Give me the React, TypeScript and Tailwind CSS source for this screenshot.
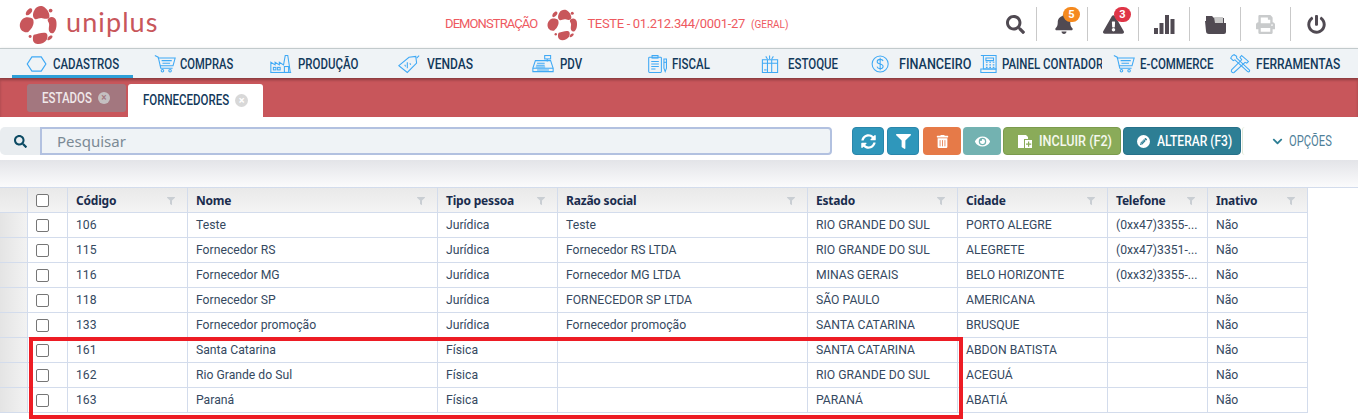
import React from "react";
import { FaSearch, FaBell, FaExclamationTriangle, FaFilter, FaSyncAlt, FaTrashAlt, FaEye, FaChevronDown, FaPrint, FaPowerOff, FaPencilAlt } from "react-icons/fa";

const Logo = ({ size }: { size: number }) => (
  <svg width={size} height={size} viewBox="0 0 40 44" fill="#c8565b">
    <path d="M16 6c2-4 8-5 11-2 4 3 6 9 4 11-3 2-6 0-8 0-3 0-5 2-7 1-3-2-2-7 0-10z" />
    <path d="M10 5c2-1 4 0 3 3-1 2-4 5-6 4-2-2 1-6 3-7z" />
    <circle cx="33" cy="7" r="2" />
    <path d="M31 15c3-2 7-1 8 3 1 5 0 11-3 13-3 1-5-1-5-4 0-3 1-5 0-7-1-2-2-3 0-5z" />
    <path d="M3 16c3-3 9-2 11 0 1 2 1 5 0 7-1 3-3 5-5 7-2 1-6 0-8-3-2-4-1-8 2-11z" />
    <circle cx="11" cy="35" r="1.6" />
    <path d="M15 33c4-1 9-3 13-2 2 1 2 4 1 7-2 3-6 5-9 5-3 0-6-2-6-5 0-2 0-4 1-5z" />
    <path d="M31 35c1-1 4-2 4 0 0 2-3 4-5 4-1 0 0-3 1-4z" />
  </svg>
);

const S = ({ children }: { children: React.ReactNode }) => (
  <svg width="22" height="20" viewBox="0 0 26 22" fill="none" stroke="#3fa9f5" strokeWidth="1.250" className="shrink-0">{children}</svg>
);

const Hexagon = () => <S><path d="M7 2.500h11l5.500 8.500-5.500 8.500H7L1.500 11z" strokeWidth="1.400" /></S>;
const Cart = () => (
  <S>
    <path d="M1 1l4 2 3 13h14" /><path d="M4.500 4H25l-2.500 9H7" /><path d="M9 7h12M10 10h9" />
    <circle cx="10" cy="19" r="1.500" /><circle cx="19" cy="19" r="1.500" />
  </S>
);
const Factory = () => (
  <S>
    <path d="M1 21V9l5 3V9l5 3V9l5 3 2-11h3l3 20z" /><path d="M1 21h24" /><rect x="4" y="15" width="3" height="3" /><rect x="9" y="15" width="3" height="3" /><rect x="17" y="14" width="5" height="7" />
  </S>
);
const Tag = () => (
  <S>
    <path d="M1 13L13 3l8-1 1 8-11 11z" /><path d="M22 4l3-3" /><path d="M11 9v7M8 12l1 2M14 10l1 2" />
  </S>
);
const Register = () => (
  <S>
    <path d="M1 16l3-9h13l5 0 3 9v4H1z" /><path d="M1 16h24" /><rect x="15" y="1" width="7" height="4" /><path d="M18 5v3" /><path d="M6 10h9M5 12.500h10M4.500 14.500h11M6 18h14" />
  </S>
);
const Clipboard = () => (
  <S>
    <rect x="2" y="3" width="15" height="18" rx="1" /><rect x="6" y="1" width="7" height="3" /><path d="M5 8h9M5 11h9M5 14h9M5 17h5" /><path d="M20 5h3v11l-1.500 4-1.500-4z" /><path d="M20 9h3" />
  </S>
);
const Box = () => (
  <S>
    <path d="M4 6h18v15H4z" /><path d="M4 10h18M10 6v15M15 6v15" /><path d="M10 5l-2-3M15 5l2-3M12.500 5V1" /><path d="M6 18h3" />
  </S>
);
const Dollar = () => (
  <S>
    <circle cx="12" cy="11" r="9.500" /><path d="M15.500 7.500C15 6 13.500 5.500 12 5.500c-2 0-3.500 1-3.500 2.700 0 3.600 7 1.800 7 5.500 0 1.800-1.500 2.800-3.500 2.800-1.800 0-3.300-.7-3.700-2.300M12 3.500v15" />
  </S>
);
const Calc = () => (
  <S>
    <path d="M4 1h15v16H4z" /><path d="M1 17h18v4H1z" /><path d="M1 1h5M7 4h9v3H7zM7 9h2M11 9h2M15 9h2M7 12h2M11 12h2M15 12h2M7 15h2M11 15h2M15 15h2" />
  </S>
);
const Tools = () => (
  <S>
    <path d="M4 1L2 4l3 3 2-1 15 14c2 1 3-1 2-2L9 4 9 2 6 0z" /><path d="M15 1l8 7-2 2-2-1-13 12c-2 1-4-1-3-3L15 6l-2-3z" />
  </S>
);

const navBase = "border-b-[3px] border-transparent";
const navItems = [
  { label: "CADASTROS", icon: <Hexagon />, box: "w-[121px] pl-[14px] border-b-[3px] border-[#2d9fd8]", text: "scale-x-[0.82]" },
  { label: "COMPRAS", icon: <Cart />, box: `w-[116px] pl-[21px] ${navBase}`, text: "-ml-[1px] scale-x-[0.8]" },
  { label: "PRODUÇÃO", icon: <Factory />, box: `w-[149px] pl-[21px] ${navBase}`, text: "ml-[1px] scale-x-[0.82]" },
  { label: "VENDAS", icon: <Tag />, box: `w-[134px] pl-[0px] ${navBase}`, text: "ml-[2px] scale-x-[0.86]" },
  { label: "PDV", icon: <Register />, box: `w-[115px] pl-[0px] ${navBase}`, text: "ml-[1px] scale-x-[0.82]" },
  { label: "FISCAL", icon: <Clipboard />, box: `w-[112px] pl-[0px] ${navBase}`, text: "-ml-[2px] scale-x-[0.82]" },
  { label: "ESTOQUE", icon: <Box />, box: `w-[111px] pl-[0px] ${navBase}`, text: "ml-[2px] scale-x-[0.82]" },
  { label: "FINANCEIRO", icon: <Dollar />, box: `w-[110px] pl-[0px] ${navBase}`, text: "ml-[2px] scale-x-[0.9]" },
  { label: "PAINEL CONTADOR", icon: <Calc />, box: `w-[133px] pl-[0px] ${navBase}`, text: "-ml-[5px] w-[122px] shrink-0 overflow-hidden scale-x-[0.82]" },
  { label: "E-COMMERCE", icon: <Cart />, box: `w-[116px] pl-[0px] ${navBase}`, text: "scale-x-[0.82]" },
  { label: "FERRAMENTAS", icon: <Tools />, box: `w-[118px] pl-[0px] ${navBase}`, text: "scale-x-[0.86]" },
];

const cols = ["Código", "Nome", "Tipo pessoa", "Razão social", "Estado", "Cidade", "Telefone", "Inativo"];
const rows = [
  ["106", "Teste", "Jurídica", "Teste", "RIO GRANDE DO SUL", "PORTO ALEGRE", "(0xx47)3355-...", "Não"],
  ["115", "Fornecedor RS", "Jurídica", "Fornecedor RS LTDA", "RIO GRANDE DO SUL", "ALEGRETE", "(0xx47)3351-...", "Não"],
  ["116", "Fornecedor MG", "Jurídica", "Fornecedor MG LTDA", "MINAS GERAIS", "BELO HORIZONTE", "(0xx32)3355-...", "Não"],
  ["118", "Fornecedor SP", "Jurídica", "FORNECEDOR SP LTDA", "SÃO PAULO", "AMERICANA", "", "Não"],
  ["133", "Fornecedor promoção", "Jurídica", "Fornecedor promoção", "SANTA CATARINA", "BRUSQUE", "", "Não"],
  ["161", "Santa Catarina", "Física", "", "SANTA CATARINA", "ABDON BATISTA", "", "Não"],
  ["162", "Rio Grande do Sul", "Física", "", "RIO GRANDE DO SUL", "ACEGUÁ", "", "Não"],
  ["163", "Paraná", "Física", "", "PARANÁ", "ABATIÁ", "", "Não"],
];

const gridCols = "grid grid-cols-[28px_40px_120px_250px_120px_250px_150px_150px_100px_100px] w-[1308px]";
const cell = "border-r border-b border-[#d3dcec] flex items-center";
const Check = () => <span className="block w-[13px] h-[13px] rounded-[2px] border border-[#767676] bg-white" />;

const HeadIcon = ({ children, badge, badgeColor }: { children: React.ReactNode; badge?: string; badgeColor?: string }) => (
  <div className="relative w-[51px] h-[34px] flex items-center justify-center border-r border-[#c9c9c9] text-[#504a52]">
    {children}
    {badge && (
      <span className={`absolute top-0 left-[26px] w-[17px] h-[15px] rounded-full text-white text-[11px] leading-[15px] text-center font-bold ${badgeColor}`}>{badge}</span>
    )}
  </div>
);

export default function App() {
  return (
    <div className="relative w-[1358px] h-[419px] overflow-hidden bg-white font-['Roboto',sans-serif] text-[#12395b]">
      <header className="h-[48px] flex items-center bg-white">
        <div className="w-[445px] flex items-center pl-[18px] shrink-0">
          <Logo size={41} />
          <span className="ml-[7px] font-['Lato',sans-serif] text-[27px] leading-none tracking-[1.1px] text-[#c8565b] -mt-[5px]">uniplus</span>
        </div>
        <div className="w-[540px] flex items-center text-[#ee5a5f] text-[13px] tracking-[-0.33px] shrink-0">
          <span className="tracking-[-0.9px]">DEMONSTRAÇÃO</span>
          <span className="ml-[9px] mr-[8px] flex"><Logo size={33} /></span>
          <span>TESTE - 01.212.344/0001-27</span>
          <span className="ml-[6px] text-[10px] tracking-normal">(GERAL)</span>
        </div>
        <div className="ml-[6px] flex items-center">
          <div className="w-[46px] h-[34px] flex items-center justify-center border-r border-[#c9c9c9] text-[#504a52] pl-[3px]"><FaSearch size={19} /></div>
          <HeadIcon badge="5" badgeColor="bg-[#f58a1f]"><span className="ml-[3px] flex"><FaBell size={20} /></span></HeadIcon>
          <HeadIcon badge="3" badgeColor="bg-[#df3547]"><FaExclamationTriangle size={21} /></HeadIcon>
          <HeadIcon>
            <svg width="21" height="20" viewBox="0 0 21 20" fill="#504a52"><rect x="0" y="14" width="4" height="6" /><rect x="5.500" y="9" width="4" height="11" /><rect x="11" y="1" width="4" height="19" /><rect x="16.500" y="5" width="4" height="15" /></svg>
          </HeadIcon>
          <HeadIcon>
            <svg width="21" height="19" viewBox="0 0 21 19"><path d="M1 1h6l2 2h10v6H1z" fill="#504a52" /><path d="M9 2h9v6H10z" fill="#c9c9c9" /><path d="M0 6h7l2 2h12v9a2 2 0 0 1-2 2H4c-2 0-3-1-3-3z" fill="#504a52" /></svg>
          </HeadIcon>
          <div className="w-[50px] h-[34px] flex items-center justify-center border-r border-[#c9c9c9] text-[#c9cbcc]"><FaPrint size={19} /></div>
          <div className="w-[51px] h-[34px] flex items-center justify-center text-[#504a52]"><FaPowerOff size={19} /></div>
        </div>
      </header>

      <nav className="h-[30px] bg-[#eff3f6] border-t border-[#c2cacc] pl-[12px] flex items-stretch text-[#12395b] text-[14px] font-medium shadow-[0_1px_3px_rgba(0,0,0,0.2)] relative">
        {navItems.map((n) => (
          <div key={n.label} className={`flex items-center gap-[5px] pt-[4px] shrink-0 whitespace-nowrap ${n.box}`}>
            {n.icon}
            <span className={`block origin-left ${n.text}`}>{n.label}</span>
          </div>
        ))}
      </nav>

      <div className="h-[39px] bg-[#c8565b] pl-[27px] pt-[6px] flex items-end gap-[2px] shadow-[inset_0_2px_3px_rgba(0,0,0,0.2)]">
        <div className="w-[99px] h-[28px] mb-[5px] rounded-[3px] bg-[#a3777f] flex items-center pl-[15px] text-[#f0e8ea] text-[14px] font-medium">
          <span className="block origin-left scale-x-[0.82] -mr-[11px]">ESTADOS</span>
          <span className="ml-[6px] w-[12px] h-[12px] rounded-full bg-[#c4bfc1] text-[#a3777f] text-[10px] leading-[12px] text-center">×</span>
        </div>
        <div className="w-[135px] h-[33px] rounded-t-[3px] bg-white flex items-center pl-[15px] text-[#12395b] text-[14px] font-medium">
          <span className="block origin-left scale-x-[0.82] -mr-[19px]">FORNECEDORES</span>
          <span className="ml-[6px] w-[13px] h-[13px] rounded-full bg-[#d8d8d8] text-white text-[11px] leading-[13px] text-center font-bold">×</span>
        </div>
      </div>

      <div className="h-[43px] flex items-start pt-[10px]">
        <div className="w-[40px] h-[28px] shrink-0 rounded-l-[5px] bg-[#e9edf0] flex items-center justify-center text-[#0c4a63]"><FaSearch size={13} /></div>
        <div className="w-[792px] h-[28px] shrink-0 bg-[#eff3f6] border-2 border-[#b2c1e0] rounded-r-[4px] pl-[15px] flex items-center text-[#7b8a95] text-[15px] font-['Noto_Sans',sans-serif]">Pesquisar</div>
        <div className="ml-[20px] flex text-white text-[14px] font-medium">
          <button className="w-[32px] h-[28px] rounded-[4px] bg-[#2f97bb] border border-[#2a86ab] flex items-center justify-center"><FaSyncAlt size={15} /></button>
          <button className="ml-[3px] w-[32px] h-[28px] rounded-[4px] bg-[#2f97bb] border border-[#2a86ab] flex items-center justify-center"><FaFilter size={15} /></button>
          <button className="ml-[4px] w-[38px] h-[28px] rounded-[4px] bg-[#e67a48] flex items-center justify-center"><FaTrashAlt size={13} /></button>
          <button className="ml-[2px] w-[38px] h-[28px] rounded-[4px] bg-[#73b2b1] flex items-center justify-center"><FaEye size={15} /></button>
          <button className="ml-[2px] w-[118px] h-[28px] rounded-[4px] bg-[#8aab59] border border-[#7b9b4d] flex items-center pl-[14px] text-[#f5f8ee]">
            <svg width="14" height="13" viewBox="0 0 14 13" fill="white" className="shrink-0"><path d="M0 0h8l2 2v2H6v9H0z" /><path d="M7 5h7v8H7z" /><path d="M10 6.500h1.200v2h2v1.200h-2v2H10v-2H8V8.500h2z" fill="#8aab59" /></svg>
            <span className="ml-[7px] whitespace-nowrap block origin-left scale-x-[0.9]">INCLUIR (F2)</span>
          </button>
          <button className="ml-[2px] w-[118px] h-[28px] rounded-[4px] bg-[#2d7e94] border border-[#27718a] flex items-center pl-[13px]">
            <span className="w-[13px] h-[13px] shrink-0 rounded-full bg-white flex items-center justify-center text-[#2d7e94]"><FaPencilAlt size={7} /></span>
            <span className="ml-[7px] whitespace-nowrap block origin-left scale-x-[0.86]">ALTERAR (F3)</span>
          </button>
          <button className="ml-[1px] w-[116px] h-[28px] bg-white border-l border-[#dfe8d8] rounded-l-[3px] flex items-center pl-[29px] text-[#4f7f99] font-normal">
            <FaChevronDown size={11} className="text-[#2d7e94] shrink-0" />
            <span className="ml-[6px] block origin-left scale-x-[0.8]">OPÇÕES</span>
          </button>
        </div>
      </div>

      <div className="h-[28px] bg-gradient-to-b from-[#e3e4e8] to-[#fbfbfc] border-b border-[#d3dcec]" />

      <div className={`${gridCols} text-[12.200px]`}>
        <div className={`${cell} h-[25px] bg-gradient-to-b from-[#e6e6e6] to-[#f0f0f0]`} />
        <div className={`${cell} h-[25px] pl-[8px] bg-gradient-to-b from-[#e9e9e9] to-[#f4f4f4]`}><Check /></div>
        {cols.map((c) => (
          <div key={c} className={`${cell} h-[25px] pl-[8px] pr-[8px] pt-[1px] justify-between font-bold text-[#1a2c4d] text-[12px] font-['Noto_Sans',sans-serif] bg-gradient-to-b from-[#e9e9e9] to-[#f4f4f4]`}>
            <span className="tracking-[-0.2px]">{c}</span>
            <FaFilter size={8} className="text-[#c9ced3] mr-[4px]" />
          </div>
        ))}
        {rows.map((r) => (
          <React.Fragment key={r[0]}>
            <div className={`${cell} h-[25px] bg-gradient-to-r from-[#e4e4e4] to-[#f2f2f2]`} />
            <div className={`${cell} h-[25px] pl-[8px]`}><Check /></div>
            {r.map((v, i) => (
              <div key={i} className={`${cell} h-[25px] pl-[8px] pt-[1px] text-[#35495f] whitespace-nowrap overflow-hidden`}>{v}</div>
            ))}
          </React.Fragment>
        ))}
      </div>

      <div className="absolute left-[29px] top-[337px] w-[934px] h-[82px] border-4 border-[#ed1c24] pointer-events-none" />
    </div>
  );
}
